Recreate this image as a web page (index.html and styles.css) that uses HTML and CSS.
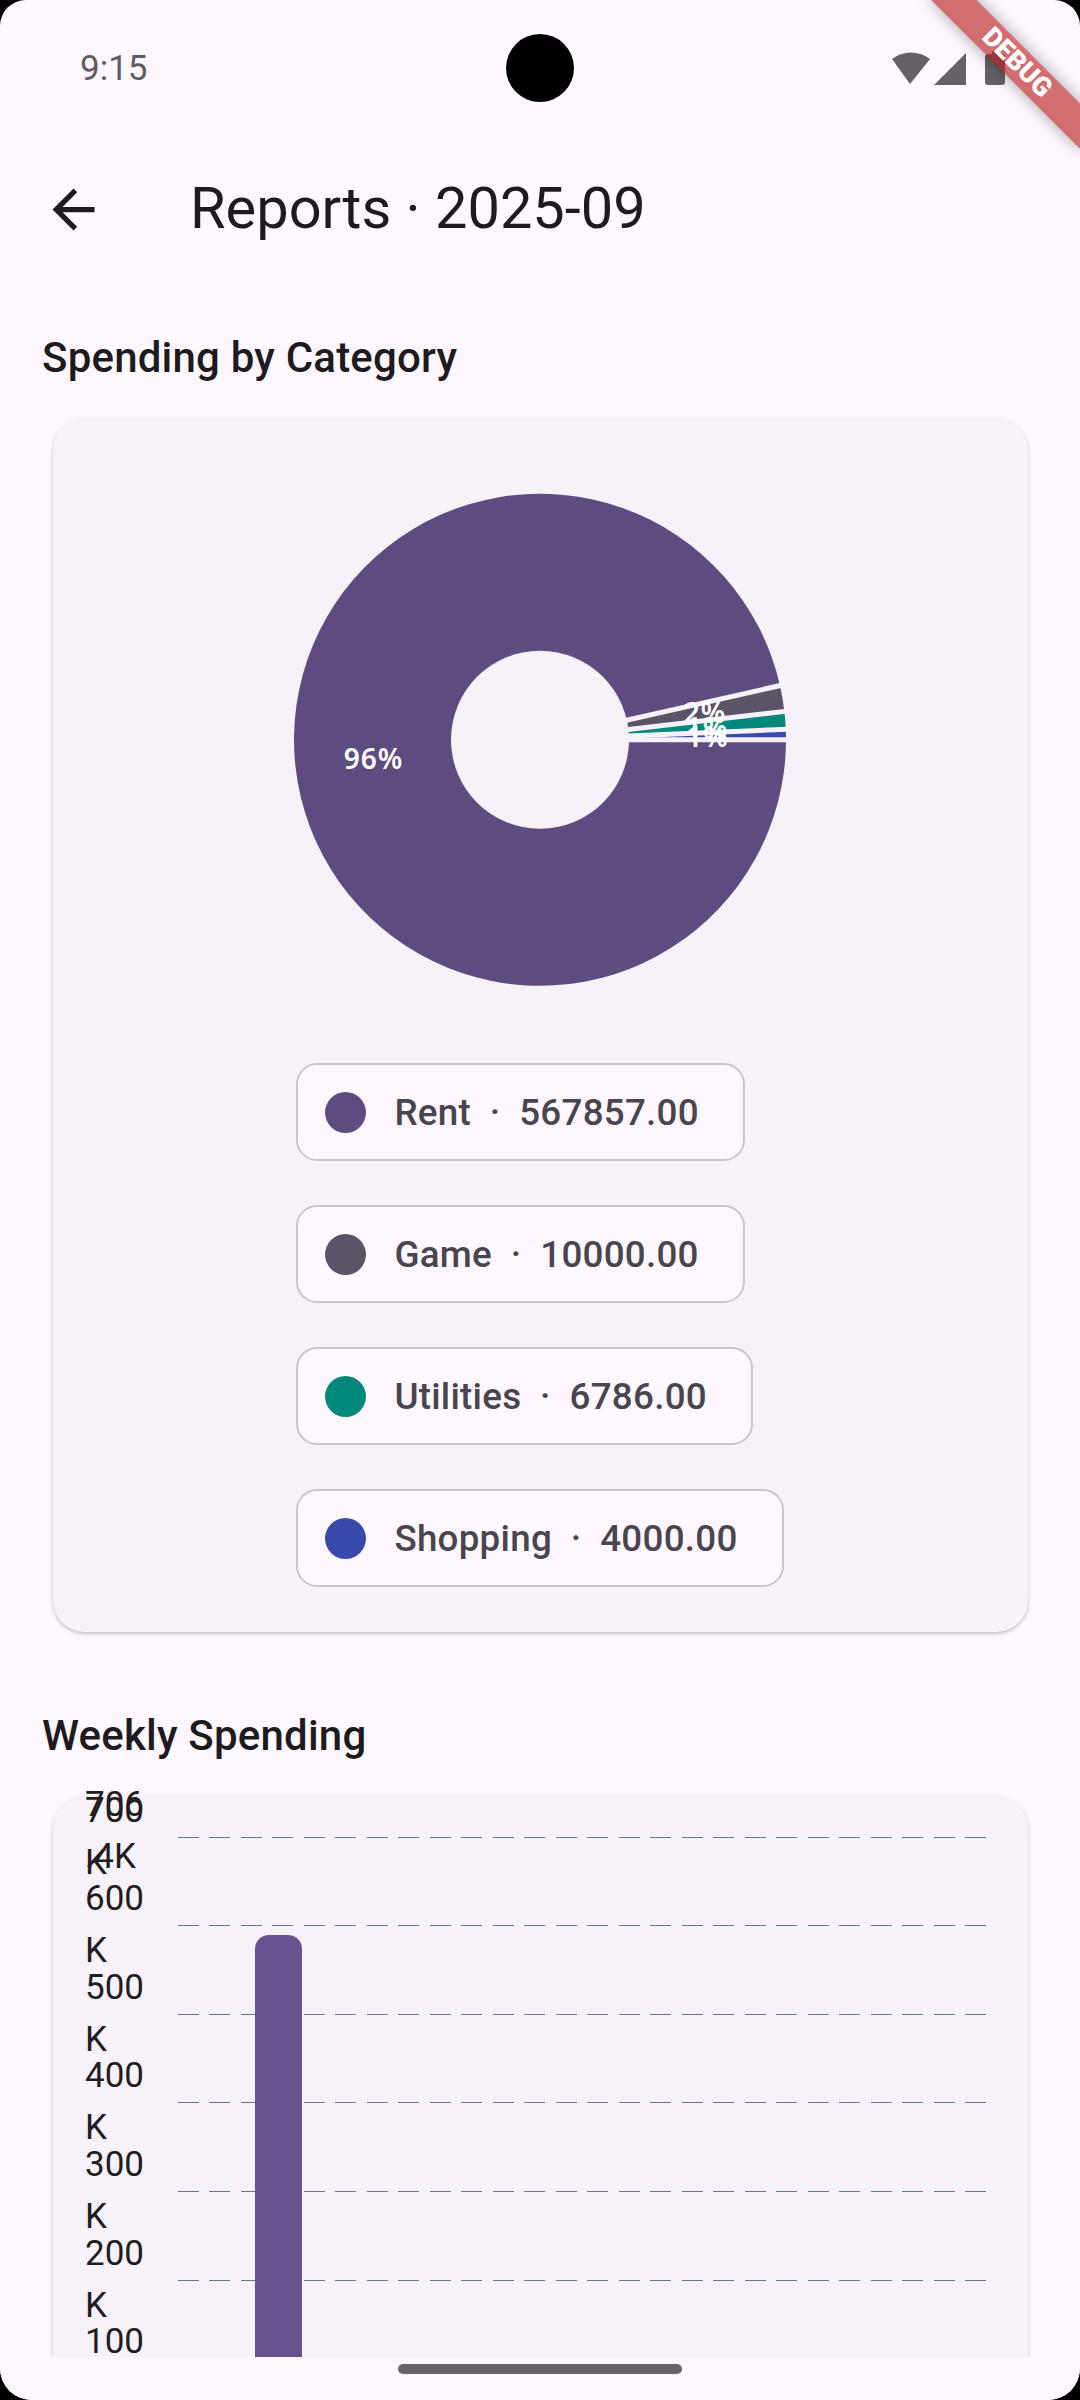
FILE: index.html
```html
<!DOCTYPE html>
<html lang="en">
<head>
<meta charset="utf-8">
<title>Reports · 2025-09</title>
<link rel="stylesheet" href="styles.css">
</head>
<body>
<div class="screen">
  <div class="status">
    <span class="time">9:15</span>
    <div class="camera"></div>
    <svg class="sys-icons" width="125" height="45" viewBox="0 0 125 45">
      <path d="M25 38 L7 13 A31 31 0 0 1 45 13 Z" fill="#656267"/>
      <path d="M49 39 L81 39 L81 7 Z" fill="#656267"/>
      <rect x="100" y="8" width="20" height="31" rx="3" fill="#656267"/>
      <rect x="107" y="5" width="8" height="5" rx="1" fill="#656267"/>
    </svg>
  </div>

  <header class="appbar">
    <div class="leading">
      <svg width="63" height="63" viewBox="0 0 24 24"><path d="M20 11H7.83l5.59-5.59L12 4l-8 8 8 8 1.41-1.41L7.83 13H20v-2z" fill="#1D1B20"/></svg>
    </div>
    <h1 class="title">Reports · 2025-09</h1>
  </header>

  <main class="content">
    <h2 class="section-title">Spending by Category</h2>
    <section class="card pie-card">
      <div class="pie-box">
        <svg class="pie" width="912" height="577.5" viewBox="-456 -288.75 912 577.5">
          <path d="M0 0 L246 0 A246 246 0 1 1 239.97 -54.13 Z" fill="#5D4C7F"/>
          <path d="M0 0 L239.97 -54.13 A246 246 0 0 1 244.37 -28.26 Z" fill="#5B5366"/>
          <path d="M0 0 L244.37 -28.26 A246 246 0 0 1 245.78 -10.50 Z" fill="#00897B"/>
          <path d="M0 0 L245.78 -10.50 A246 246 0 0 1 246 0 Z" fill="#3949AB"/>
          <g stroke="#F7F2FA" stroke-width="5">
            <line x1="0" y1="0" x2="260" y2="0"/>
            <line x1="0" y1="0" x2="253.63" y2="-57.21"/>
            <line x1="0" y1="0" x2="258.28" y2="-29.87"/>
            <line x1="0" y1="0" x2="259.76" y2="-11.10"/>
          </g>
          <circle cx="0" cy="0" r="89" fill="#F7F2FA"/>
          <g class="pie-label">
            <text x="-166.5" y="18.6">96%</text>
            <text x="165.1" y="-28.1">2%</text>
            <text x="167.0" y="-13.2">1%</text>
            <text x="167.5" y="-3.6">1%</text>
          </g>
        </svg>
      </div>
      <div class="legend">
        <div class="chip"><span class="dot dot-rent"></span><span class="chip-text">Rent  ·  567857.00</span></div>
        <div class="chip"><span class="dot dot-game"></span><span class="chip-text">Game  ·  10000.00</span></div>
        <div class="chip"><span class="dot dot-util"></span><span class="chip-text">Utilities  ·  6786.00</span></div>
        <div class="chip"><span class="dot dot-shop"></span><span class="chip-text">Shopping  ·  4000.00</span></div>
      </div>
    </section>

    <h2 class="section-title second">Weekly Spending</h2>
    <section class="card bar-card">
      <div class="bar-chart">
        <div class="plot">
          <div class="grid" style="top:5.67px"></div>
          <div class="grid" style="top:94.27px"></div>
          <div class="grid" style="top:182.87px"></div>
          <div class="grid" style="top:271.47px"></div>
          <div class="grid" style="top:360.07px"></div>
          <div class="grid" style="top:448.67px"></div>
          <div class="grid" style="top:537.27px"></div>
          <div class="bar" style="left:77px; top:104.3px; height:521.6px"></div>
        </div>
        <div class="y-label" style="top:-52px">706<br>.4K</div>
        <div class="y-label" style="top:-46.33px">700<br>K</div>
        <div class="y-label" style="top:42.27px">600<br>K</div>
        <div class="y-label" style="top:130.87px">500<br>K</div>
        <div class="y-label" style="top:219.47px">400<br>K</div>
        <div class="y-label" style="top:308.07px">300<br>K</div>
        <div class="y-label" style="top:396.67px">200<br>K</div>
        <div class="y-label" style="top:485.27px">100<br>K</div>
        <div class="y-label" style="top:573.87px">0</div>
      </div>
    </section>
  </main>

  <div class="navbar"><div class="pill"></div></div>
  <div class="debug-banner">DEBUG</div>
</div>
</body>
</html>
```
FILE: styles.css
```css
* { box-sizing: border-box; }
html, body { margin: 0; padding: 0; background: #000; }
body { font-family: Roboto, "Noto Sans", "Liberation Sans", sans-serif; }

.screen {
  position: relative;
  width: 1080px;
  height: 2400px;
  overflow: hidden;
  background: #FEF7FF;
  border-radius: 26px 26px 32px 32px;
  display: flex;
  flex-direction: column;
}

/* status bar */
.status {
  position: relative;
  flex: none;
  height: 125px;
  padding: 11px 70px 0 80px;
  display: flex;
  align-items: center;
  justify-content: space-between;
}
.time { font-size: 35px; color: #5F5B63; }
.camera {
  position: absolute;
  left: 506px;
  top: 34px;
  width: 68px;
  height: 68px;
  border-radius: 50%;
  background: #000;
}
.sys-icons { display: block; margin-top: 1px; }

/* app bar */
.appbar {
  flex: none;
  height: 168px;
  display: flex;
  align-items: center;
}
.leading {
  width: 147px;
  height: 147px;
  display: flex;
  align-items: center;
  justify-content: center;
}
.leading svg { display: block; }
.title {
  margin: 0 0 0 43px;
  font-size: 57.75px;
  font-weight: 400;
  color: #1D1B20;
  line-height: 1.17;
}

/* content */
.content {
  flex: 1;
  overflow: hidden;
  padding: 33px 42px 0;
}
.section-title {
  margin: 0;
  font-size: 42px;
  line-height: 63px;
  font-weight: 500;
  color: #1D1B20;
  letter-spacing: 0.2px;
}
.section-title.second { margin-top: 72px; }

.card {
  margin: 30px 10.5px 0;
  background: #F7F2FA;
  border-radius: 31.5px;
  box-shadow: 0 2px 3px rgba(0, 0, 0, 0.16), 0 1px 7px rgba(0, 0, 0, 0.07);
}
.pie-card { padding: 31.5px 31.5px 45px; }
.pie-box { height: 577.5px; }
.pie { display: block; }
.pie-label text {
  fill: #FFFFFF;
  font-family: "Noto Sans", Roboto, sans-serif;
  font-size: 28px;
  font-weight: 600;
  letter-spacing: 1px;
  text-anchor: middle;
  dominant-baseline: central;
}

.legend {
  width: fit-content;
  margin: 35px auto 0;
  display: flex;
  flex-direction: column;
  align-items: flex-start;
  gap: 44px;
}
.chip {
  height: 98px;
  display: flex;
  align-items: center;
  padding: 0 44px 0 27px;
  border: 2px solid #CAC4D0;
  border-radius: 21px;
  background: #FEF7FF;
}
.dot {
  flex: none;
  width: 41px;
  height: 41px;
  border-radius: 50%;
  margin-right: 28px;
}
.dot-rent { background: #5D4C7F; }
.dot-game { background: #5B5366; }
.dot-util { background: #00897B; }
.dot-shop { background: #3949AB; }
.chip-text {
  white-space: pre;
  font-size: 36.75px;
  font-weight: 500;
  color: #49454F;
  letter-spacing: 0.26px;
}

/* bar chart */
.bar-card { padding: 34px 31.5px 0; height: 700px; }
.bar-chart {
  position: relative;
  height: 660px;
}
.plot {
  position: absolute;
  left: 94px;
  top: 0;
  width: 809px;
  height: 626px;
}
.grid {
  position: absolute;
  left: 0;
  right: 0;
  height: 1px;
  background: repeating-linear-gradient(to right, #607D8B 0 21px, transparent 21px 31.5px);
}
.bar {
  position: absolute;
  width: 47px;
  background: #67548E;
  border-radius: 14px 14px 0 0;
}
.y-label {
  position: absolute;
  left: 1px;
  width: 94px;
  font-size: 35px;
  line-height: 52px;
  color: #1F1D22;
}

/* nav bar */
.navbar {
  flex: none;
  height: 43px;
  background: #FEF7FF;
  display: flex;
  justify-content: center;
  padding-top: 7px;
}
.pill {
  width: 284px;
  height: 10px;
  border-radius: 5px;
  background: #666468;
}

/* debug banner */
.debug-banner {
  position: absolute;
  left: 912px;
  top: 47.25px;
  width: 210px;
  height: 31.5px;
  transform: rotate(45deg);
  background: rgba(183, 28, 28, 0.63);
  box-shadow: 0 0 16px rgba(0, 0, 0, 0.35);
  color: #FFFFFF;
  font-family: Roboto, sans-serif;
  font-size: 26.8px;
  font-weight: 900;
  line-height: 31.5px;
  text-align: center;
}
```
